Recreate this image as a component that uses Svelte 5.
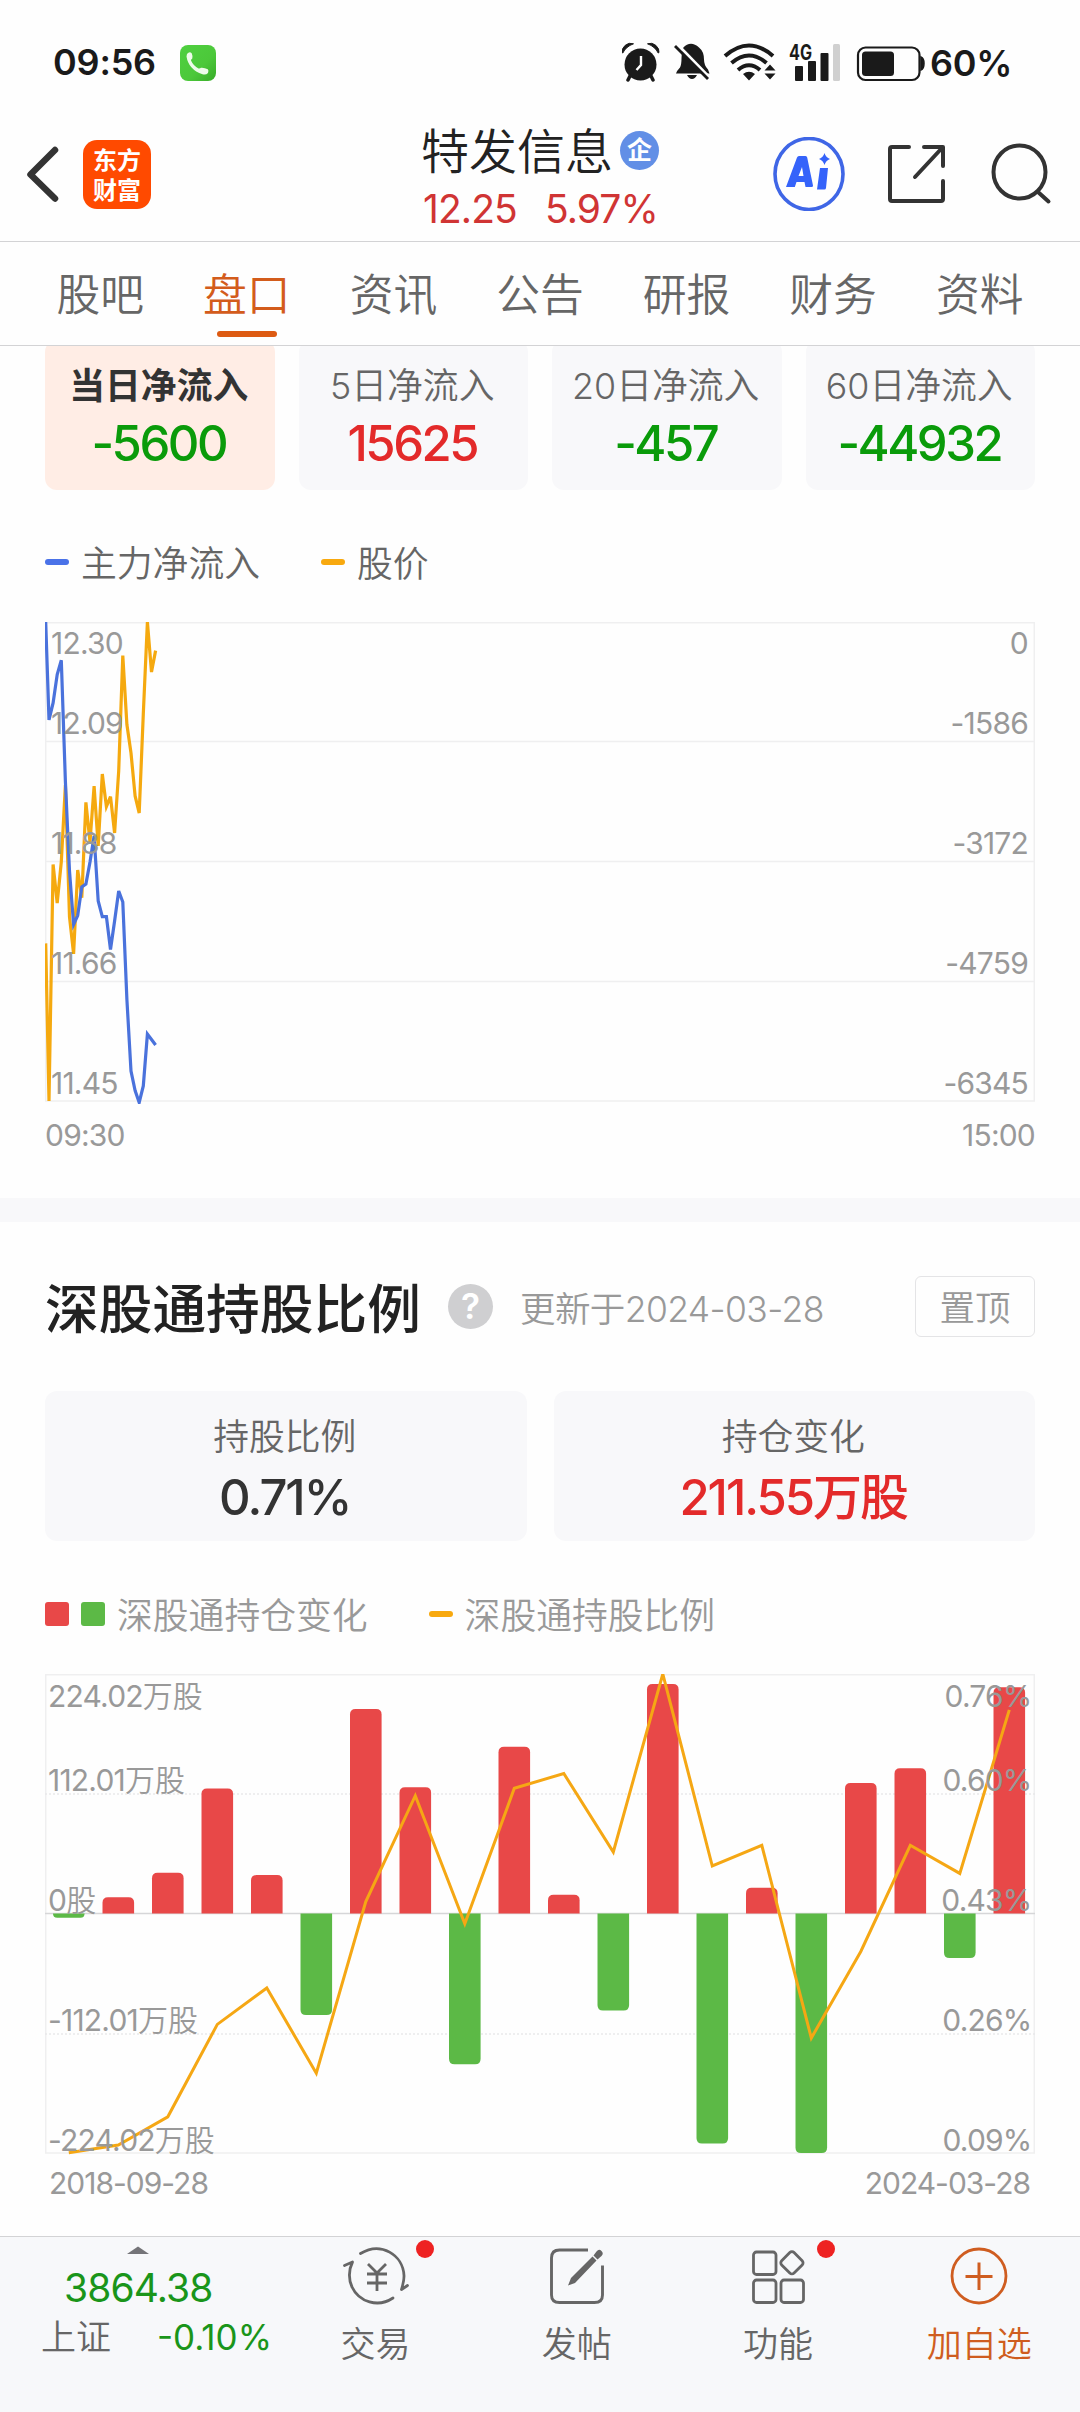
<script>
  const tabs = ['股吧', '盘口', '资讯', '公告', '研报', '财务', '资料'];
  const flows = [
    { label: '当日净流入', value: '-5600', tone: 'down', active: true },
    { label: '5日净流入', value: '15625', tone: 'up' },
    { label: '20日净流入', value: '-457', tone: 'down' },
    { label: '60日净流入', value: '-44932', tone: 'down' }
  ];

  // Intraday series, as depth below the top of the plot.
  const price = [321.4, 479, 242.5, 281, 240, 163, 295, 331.8, 248, 275.7, 180.4, 220, 164, 224, 152, 184.6, 174.6, 211, 149, 33.6, 102.5, 131, 174, 191, 92, 0, 50, 28.6];
  const inflow = [0, 97.9, 81, 52.5, 38.2, 159.6, 249, 302.5, 293.6, 265, 262, 240, 214, 279, 294.6, 294.6, 327.5, 299, 269, 280, 377.5, 449, 468.6, 480.5, 464, 412, 417.5, 423];
  const minutes = (s) => s.map((y, i) => `${(i ? 4 + 4.1 * (i - 1) : 0.7).toFixed(1)},${y}`).join(' ');
  const flowTicks = [
    { y: 32, l: '12.30', r: '0' },
    { y: 112, l: '12.09', r: '-1586' },
    { y: 232, l: '11.88', r: '-3172' },
    { y: 352, l: '11.66', r: '-4759' },
    { y: 472, l: '11.45', r: '-6345' }
  ];

  // Quarterly position changes and holding ratio.
  const changes = [-4.2, 16.3, 40.7, 124.9, 38.5, -101.6, 204.4, 126.3, -150.8, 166.7, 18.7, -97.1, 229.6, -230, 25.7, -239.6, 130.4, 145.2, -44.6, 226.2];
  const ratio = [478.7, 471, 442.8, 350.4, 314, 399.2, 227.5, 121.7, 249.7, 114.3, 99.5, 178, 0, 192, 171.3, 364, 277.5, 171.3, 199.4, 35.9];
  const ratioLine = ratio.map((y, i) => `${23.8 + i * 49.5},${y}`).join(' ');
  const holdTicks = [
    { y: 33, l: '224.02', u: '万股', r: '0.76%' },
    { y: 117, l: '112.01', u: '万股', r: '0.60%' },
    { y: 237, l: '0', u: '股', r: '0.43%' },
    { y: 357, l: '-112.01', u: '万股', r: '0.26%' },
    { y: 477, l: '-224.02', u: '万股', r: '0.09%' }
  ];
  function bar(v, i) {
    const x = 8 + i * 49.5, w = 31.6, h = Math.abs(v), r = Math.min(5.5, h), d = v > 0 ? -1 : 1, z = 239.5;
    const e = z + d * h;
    return `M${x} ${z}V${e - d * r}Q${x} ${e} ${x + r} ${e}H${x + w - r}Q${x + w} ${e} ${x + w} ${e - d * r}V${z}Z`;
  }
</script>

<div class="screen">
  <div class="status">
    <span class="time">09:56</span>
    <svg class="phone" width="36" height="36" viewBox="0 0 36 36">
      <defs><linearGradient id="pg" x1="0" y1="0" x2="1" y2="1"><stop offset="0" stop-color="#4fd040" /><stop offset=".6" stop-color="#4cc83a" /><stop offset="1" stop-color="#37ab28" /></linearGradient></defs>
      <rect width="36" height="36" rx="8" fill="url(#pg)" />
      <path d="M7 9q2.500-3.200 4.700-.8q1.300 3 .6 5.300q-1.500 1-1.300 2q2.500 5.500 7.500 8q1.500.3 2.500-.7q3.500-.3 6.800 1.500q1.200 1.300.2 3.700q-2 2.200-5.500 1.300Q8.500 24.500 6.500 11.500z" fill="#eefbea" />
    </svg>
    <svg class="sys" width="308" height="44" viewBox="0 -4 308 44">
      <g fill="#1a1a1a">
        <circle cx="18.500" cy="22.500" r="16" />
        <path d="M0 10.500Q-.5 7 3 3.500Q7 0 11.500 1.800Q4 4.500 .8 11zM37 10.500Q37.500 7 34 3.500Q30 0 25.500 1.800Q33 4.500 36.200 11z" stroke="#1a1a1a" stroke-width="1" />
        <path d="M8 34l-2 4M29 34l2 4" stroke="#1a1a1a" stroke-width="3.500" stroke-linecap="round" />
        <path d="M19 14v9l-4.500 5" fill="none" stroke="#fff" stroke-width="2.400" />
        <path d="M61 6q7.500-8 16-.5q5 4 5 12q0 6 4 10l1.500 4H54q1-3 4-6q1.500-3 1.500-9q0-6 1.500-10.500zM65 33h10q-2 4-5 4t-5-4z" />
        <path d="M56 3l34 35" stroke="#fff" stroke-width="3" /><path d="M53 4l33 33" stroke="#1a1a1a" stroke-width="2.800" />
      </g>
      <g fill="none" stroke="#1a1a1a" stroke-width="4">
        <path d="M103 14q24-21 48 0M109.500 21q17.500-15 35 0M116 28q11-9.500 22 0" />
      </g>
      <path d="M121 32q6-4.500 12 0l-6 6.500zM142.500 28.500l5.500-6 5.500 6zM142.500 31.500l5.500 6 5.500-6z" fill="#1a1a1a" />
      <g fill="#1a1a1a"><rect x="173" y="24" width="8" height="15" rx="1" /><rect x="186" y="19" width="8" height="20" rx="1" /><rect x="198.500" y="11" width="8" height="28" rx="1" /></g>
      <rect x="211" y="2" width="7" height="37" rx="1.500" fill="#d0d0d0" />
      <text x="167" y="17.500" class="net" textLength="23" lengthAdjust="spacingAndGlyphs">4G</text>
      <rect x="236" y="5.500" width="61.500" height="32.500" rx="7.500" fill="none" stroke="#1a1a1a" stroke-width="2.200" />
      <rect x="240" y="9.500" width="32" height="24.500" rx="3.500" fill="#1a1a1a" />
      <path d="M299 15q3 1 3 6.500t-3 6.500z" fill="#1a1a1a" stroke="#1a1a1a" stroke-width="1.500" />
    </svg>
    <span class="pct">60%</span>
  </div>

  <header>
    <svg class="back" width="34" height="60" viewBox="0 0 34 60"><path d="M29 6L4.500 30.500 29 54.500" fill="none" stroke="#333" stroke-width="6.500" stroke-linecap="round" stroke-linejoin="round" /></svg>
    <div class="logo"><span>东方</span><span>财富</span></div>
    <div class="stock">
      <div class="name"><span>特发信息</span><i>企</i></div>
      <div class="quote"><span>12.25</span><span>5.97%</span></div>
    </div>
    <svg class="ai" width="72" height="74" viewBox="0 0 72 74">
      <ellipse cx="36" cy="37" rx="34" ry="35.500" fill="none" stroke="#3f66e6" stroke-width="3.600" />
      <path d="M13 50l11-29.500q.5-1.500 2-1.500h6.500q1.500 0 1.700 1.500L40 48.500q.2 1.500-1.500 1.500h-6l-1-5h-8l-1.700 5zM25.500 39h5l-1.500-9z" fill="#3563fa" />
      <path d="M47 31h8l-2 20q-.2 1.500-1.700 1.500H44zM51.500 16q1.300 4.500 5.500 6q-4.200 1.500-5.500 6q-1.300-4.500-5.500-6q4.200-1.500 5.500-6z" fill="#3563fa" />
    </svg>
    <svg class="share" width="60" height="60" viewBox="0 0 60 60"><g fill="none" stroke="#333" stroke-width="4" stroke-linecap="round" stroke-linejoin="round"><path d="M22 3H5Q3 3 3 5v50q0 2 2 2h49q2 0 2-2V37M37 3h19v19M55 4L28 33" /></g></svg>
    <svg class="search" width="62" height="64" viewBox="0 0 62 64"><g fill="none" stroke="#333" stroke-width="4" stroke-linecap="round"><ellipse cx="29.500" cy="30" rx="26" ry="26.500" /><path d="M48 50l10.500 9.500" /></g></svg>
  </header>

  <nav>
    {#each tabs as t, i}<div class="tab" class:on={i === 1}>{t}</div>{/each}
  </nav>

  <main>
    <section class="flow">
      <div class="cards four">
        {#each flows as f}
          <div class="card" class:active={f.active}><div class="label">{f.label}</div><div class="value {f.tone}">{f.value}</div></div>
        {/each}
      </div>
      <div class="legend first">
        <i class="dash blue"></i><span>主力净流入</span><i class="dash orange gap"></i><span>股价</span>
      </div>
      <svg class="chart" width="990" height="482" viewBox="0 0 990 482">
        <g fill="none" stroke="#efeff0" stroke-width="1.500"><path d="M.7 .7H989.300V479H.7ZM0 119.500H990M0 239.500H990M0 359.500H990" /></g>
        <polyline points={minutes(price)} fill="none" stroke="#f5a90f" stroke-width="3.200" />
        <polyline points={minutes(inflow)} fill="none" stroke="#4a72dc" stroke-width="3.200" />
        {#each flowTicks as t}<text x="6" y={t.y}>{t.l}</text><text class="end" x="983" y={t.y}>{t.r}</text>{/each}
      </svg>
      <div class="axis"><span>09:30</span><span>15:00</span></div>
    </section>

    <div class="band"></div>

    <section class="hold">
      <div class="head">
        <h2>深股通持股比例</h2>
        <i class="help">?</i>
        <span class="date">更新于2024-03-28</span>
        <button>置顶</button>
      </div>
      <div class="cards two">
        <div class="card"><div class="label">持股比例</div><div class="value">0.71%</div></div>
        <div class="card"><div class="label">持仓变化</div><div class="value up">211.55万股</div></div>
      </div>
      <div class="legend second">
        <i class="sq red"></i><i class="sq green"></i><span>深股通持仓变化</span><i class="dash orange gap2"></i><span>深股通持股比例</span>
      </div>
      <svg class="chart" width="990" height="482" viewBox="0 0 990 482">
        <path d="M.7 .7H989.300V479H.7Z" fill="none" stroke="#efeff0" stroke-width="1.600" />
        <path d="M0 120H990M0 360H990" stroke="#e9e9ea" stroke-width="1.300" stroke-dasharray="2 2" />
        <path d="M0 239.500H990" stroke="#d6d6d8" stroke-width="1.300" />
        {#each changes as v, i}<path d={bar(v, i)} fill={v > 0 ? '#e84848' : '#5cb946'} />{/each}
        <polyline points={ratioLine} fill="none" stroke="#f5a714" stroke-width="3" />
        {#each holdTicks as t}<text x="3" y={t.y}>{t.l}<tspan class="unit">{t.u}</tspan></text><text class="end" x="986.500" y={t.y}>{t.r}</text>{/each}
      </svg>
      <div class="axis inset"><span>2018-09-28</span><span>2024-03-28</span></div>
    </section>
  </main>

  <footer>
    <div class="index">
      <svg width="22" height="8" viewBox="0 0 22 8"><path d="M0 8L11 .5 22 8z" fill="#747478" /></svg>
      <div class="pts">3864.38</div>
      <div class="row"><span>上证</span><b>-0.10%</b></div>
    </div>
    <div class="act">
      <div class="ico"><svg width="66" height="62" viewBox="0 0 66 62"><g fill="none" stroke="#666" stroke-width="2.800" stroke-linecap="round" stroke-linejoin="round">
        <path d="M17.500 8.500C38-4 60 10 61 30.500q.2 5-2.500 14l6-4M1.500 20.500l8-3.500C5.500 25 5.500 35 9 42c7 15 26 21 41 11" /><path d="M25 19l9 9 9-9M24 29h20M24 38h20M34 28v18" stroke-linecap="butt" /></g></svg><em></em></div><span>交易</span>
    </div>
    <div class="act">
      <div class="ico"><svg width="56" height="58" viewBox="0 0 56 58"><path d="M39 3H10.500Q2.500 3 2.500 11v37q0 7.500 8 7.500h35q8 0 8-7.500V18.500" fill="none" stroke="#666" stroke-width="2.900" /><path d="M19 38.500l3-7.500L43.500 9.500l4 4L26 36zM44.500 8.500l3-4q2.500-3 5-.5t0 5l-4 3.500z" fill="#666" /></svg></div><span>发帖</span>
    </div>
    <div class="act">
      <div class="ico"><svg width="56" height="56" viewBox="0 0 56 56"><g fill="none" stroke="#666" stroke-width="2.800" stroke-linejoin="round"><rect x="3.500" y="4" width="22.500" height="22.500" rx="3" /><rect x="3.500" y="32" width="22.500" height="22.500" rx="3" /><rect x="31" y="32" width="22.500" height="22.500" rx="3" /><rect x="33" y="6" width="17.500" height="17.500" rx="3" transform="rotate(45 41.750 15)" /></g></svg><em class="near"></em></div><span>功能</span>
    </div>
    <div class="act hot">
      <div class="ico"><svg width="58" height="58" viewBox="0 0 58 58"><ellipse cx="29" cy="29" rx="27" ry="27" fill="none" stroke="#cf5d20" stroke-width="2.800" /><path d="M15.500 29.500h27M29 15.500v27.500" stroke="#cf5d20" stroke-width="3" /></svg></div><span>加自选</span>
    </div>
  </footer>
</div>

<style>
  :global(body) { margin: 0; background: #fefefe; }
  .screen { width: 1080px; height: 2412px; display: flex; flex-direction: column; overflow: hidden; background: #fefefe; font-family: Inter, "Noto Sans CJK SC", sans-serif; font-weight: 350; color: #333; }
  .screen :global(*) { box-sizing: border-box; }
  i, em { font-style: normal; }
  .status { height: 107px; padding: 42px 0 0 53px; display: flex; align-items: flex-start; color: #1a1a1a; font-weight: 600; white-space: nowrap; }
  .time { width: 127px; font-size: 36px; line-height: 40px; letter-spacing: -.2px; }
  .phone { margin-top: 3px; }
  .sys { margin: -4px 0 0 406px; }
  .pct { font-size: 36px; line-height: 42px; letter-spacing: -.3px; }
  .net { font: 700 21px Inter, sans-serif; fill: #1a1a1a; }
  header { height: 135px; display: flex; align-items: center; border-bottom: 1px solid #d3d3d5; padding-left: 26px; }
  .logo { width: 68px; height: 69px; margin-left: 23px; border-radius: 14px; background: #ff4a00; color: #fff; display: flex; flex-direction: column; align-items: center; justify-content: center; font-family: "Noto Sans CJK SC", sans-serif; font-weight: 700; font-size: 24px; line-height: 30px; }
  .stock { width: 240px; margin-left: 270px; height: 135px; padding-top: 17px; }
  .name { display: flex; align-items: center; font-size: 48px; line-height: 56px; height: 56px; color: #222; white-space: nowrap; }
  .name i { width: 39px; height: 39px; margin: -2px 0 0 7px; border-radius: 50%; background: #628fe6; color: #fff; font-size: 25px; line-height: 38px; font-weight: 700; text-align: center; }
  .quote { display: flex; gap: 28px; padding-left: 2px; font-size: 39px; line-height: 58px; letter-spacing: -.9px; font-weight: 400; color: #d03434; }
  .ai { margin-left: 112px; }
  .share { margin-left: 42px; }
  .search { margin-left: 43px; }
  nav { height: 104px; display: grid; grid-template-columns: repeat(7, 1fr); padding: 0 27px; border-bottom: 1px solid #d3d3d5; }
  .tab { display: flex; flex-direction: column; align-items: center; padding-top: 23px; font-size: 43.800px; line-height: 62px; height: 102px; color: #666; }
  .on { color: #d35c1c; }
  .on::after { content: ""; width: 60px; height: 6px; margin-top: 4px; border-radius: 3px; background: #dd5a12; }
  main { height: 1890px; overflow: hidden; }
  section { padding: 0 45px; }
  .flow { height: 852px; overflow: hidden; }
  .cards { display: grid; height: 150px; }
  .four { grid-template-columns: repeat(4, 1fr); gap: 24px; margin-top: -6px; }
  .two { grid-template-columns: 1fr 1fr; gap: 27px; }
  .card { border-radius: 12px; background: #f8f8fa; display: flex; flex-direction: column; align-items: center; padding: 24px 2px 0 0; white-space: nowrap; }
  .active { background: #ffede5; }
  .label { font-size: 35.800px; line-height: 44px; color: #666; }
  .active .label { color: #333; font-weight: 600; }
  .value { font-size: 49px; line-height: 72px; font-weight: 500; letter-spacing: -2.500px; color: #333; }
  .two .value { margin-top: 3px; letter-spacing: -2px; }
  .down { color: #0a9b0a; }
  .value.up { color: #e32a2a; }
  .legend { display: flex; align-items: center; height: 50px; font-size: 35.800px; color: #666; white-space: nowrap; }
  .legend span { margin-top: -2px; }
  .first { margin-top: 47px; }
  .dash { width: 24px; height: 6px; border-radius: 3px; margin-right: 12px; }
  .blue { background: #4a72e8; }
  .orange { background: #f8a90f; }
  .gap { margin-left: 61px; }
  .gap2 { margin-left: 61px; }
  .chart { display: block; overflow: hidden; }
  .first + .chart { margin-top: 35px; }
  .chart text { font-size: 30px; letter-spacing: -.8px; fill: #999; font-weight: 400; }
  .chart .unit { letter-spacing: 0; font-weight: 350; }
  .chart .end { text-anchor: end; }
  .axis { display: flex; justify-content: space-between; height: 50px; font-size: 30px; letter-spacing: -.8px; line-height: 50px; color: #999; margin-top: 6px; font-weight: 400; }
  .inset { padding: 0 5px 0 4px; margin-top: 2px; letter-spacing: -1px; }
  .band { height: 24px; background: #f8f8fa; }
  .head { display: flex; align-items: center; height: 60px; margin-top: 54px; white-space: nowrap; }
  h2 { margin: 0; padding-top: 8px; font-size: 53.700px; line-height: 60px; font-weight: 500; color: #222; width: 403px; }
  .help { width: 45px; height: 45px; border-radius: 50%; background: #cfcfd1; color: #fff; font-size: 35px; line-height: 45px; font-weight: 600; text-align: center; }
  .date { margin-left: 27px; flex: 1; font-size: 35.500px; letter-spacing: -.6px; color: #999; }
  button { width: 120px; height: 61px; padding: 5px 0 0; border: 1.500px solid #e4e4e6; border-radius: 6px; background: none; font: inherit; font-size: 35.500px; line-height: 52px; color: #999; }
  .head + .cards { margin-top: 55px; }
  .second { margin-top: 48px; color: #999; }
  .second + .chart { margin-top: 35px; }
  .sq { width: 24px; height: 24px; border-radius: 3px; margin-right: 12px; }
  .red { background: #e84848; }
  .green { background: #5cb946; }
  footer { height: 176px; display: grid; grid-template-columns: 275px repeat(4, 1fr); background: #f7f8fa; border-top: 1px solid #d3d3d5; color: #666; white-space: nowrap; }
  .index { display: flex; flex-direction: column; padding: 9px 0 0 41px; }
  .index svg { margin-left: 86px; display: block; }
  .pts { margin: 8px 0 0 23px; font-size: 39px; line-height: 52px; letter-spacing: -.9px; color: #1a951a; font-weight: 400; }
  .row { display: flex; gap: 46px; font-size: 35px; line-height: 46px; }
  .row b { font-weight: 400; color: #1a951a; }
  .act { display: flex; flex-direction: column; align-items: center; font-size: 35px; line-height: 50px; padding-top: 1px; }
  .ico { position: relative; height: 76px; display: flex; align-items: center; margin-bottom: 5px; }
  em { position: absolute; width: 18px; height: 18px; border-radius: 50%; background: #ee2222; top: 2px; left: 73px; }
  .near { left: 67px; }
  .hot { color: #cf5d20; }
</style>
